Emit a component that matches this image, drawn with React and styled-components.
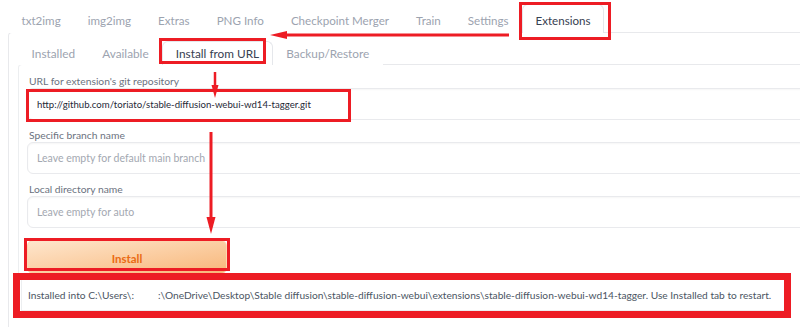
import React from 'react';
import styled, { createGlobalStyle } from 'styled-components';

const Global = createGlobalStyle`
  html, body { margin: 0; padding: 0; background: #fff; overflow: hidden; }
  body { font-family: Lato, "Noto Sans", sans-serif; }
`;

const Page = styled.div`
  position: relative;
  width: 840px;
  height: 327px;
  overflow: hidden;
  background: #fff;
`;

const TabBar = styled.div`
  display: flex;
  align-items: flex-end;
  height: 32px;
  padding-left: 8px;
`;

const Tab = styled.div`
  box-sizing: border-box;
  height: 29px;
  padding: 3px 12.5px 0;
  display: flex;
  align-items: center;
  font-size: 11.6px;
  line-height: 1;
  white-space: nowrap;
  color: ${p => (p.$active ? '#374151' : '#9ca3af')};
  border: 1px solid ${p => (p.$active ? '#e5e7eb' : 'transparent')};
  border-bottom: none;
  border-radius: 6px 6px 0 0;
  background: #fff;
  margin-bottom: -1px;
  position: relative;
  z-index: 1;
`;

const OuterPanel = styled.div`
  margin-left: 8px;
  border-top: 1px solid #e8e9ec;
  border-left: 1px solid #e8e9ec;
  border-top-left-radius: 4px;
  padding-left: 9px;
  height: 300px;
`;

const SubTabBar = styled.div`
  display: flex;
  align-items: flex-end;
  height: 31px;
`;

const SubTab = styled(Tab)`
  height: 24px;
  padding: 1px 12.6px 0;
  font-size: 11.8px;
`;

const InnerPanel = styled.div`
  border-top: 1px solid #e8e9ec;
  border-left: 1px solid #eceef0;
  border-top-left-radius: 4px;
  padding: 9px 0 0 8px;
  display: flex;
  flex-direction: column;
  gap: 8px;
`;

const Field = styled.div`
  display: flex;
  flex-direction: column;
`;

const Label = styled.div`
  height: 14px;
  line-height: 14px;
  font-size: 10.3px;
  color: #6b7280;
  padding-left: 2px;
  white-space: nowrap;
`;

const Input = styled.div`
  box-sizing: border-box;
  height: 32px;
  margin-right: 10px;
  border: 1px solid #e9eaed;
  border-radius: 6px;
  box-shadow: 0 1px 2px rgba(0, 0, 0, 0.04) inset;
  padding-left: 9px;
  display: flex;
  align-items: center;
  font-size: ${p => (p.$placeholder ? '10.5px' : '9.6px')};
  white-space: nowrap;
  color: ${p => (p.$placeholder ? '#a3a8b1' : '#1f2937')};
`;

const InstallButton = styled.div`
  box-sizing: border-box;
  margin-top: 4px;
  width: 200px;
  height: 34px;
  border-radius: 6px;
  border: 1px solid #fcd8b2;
  background: linear-gradient(to bottom right, #fee6cd, #f8b77a);
  display: flex;
  align-items: center;
  justify-content: center;
  padding-top: 2px;
  font-size: 11.5px;
  font-weight: 700;
  color: #ea6a12;
`;

const Result = styled.div`
  box-sizing: border-box;
  margin: 5px 0 0 3px;
  width: 764px;
  height: 32px;
  border: 1px solid #eceef0;
  padding-left: 6px;
  line-height: 30px;
  font-size: 10.2px;
  color: #4b5563;
  white-space: nowrap;
  overflow: hidden;
`;

const Redacted = styled.span`
  display: inline-block;
  width: 24px;
`;

const Overlay = styled.div`
  position: absolute;
  inset: 0;
  pointer-events: none;
  z-index: 10;
`;

const Mark = styled.div`
  position: absolute;
  box-sizing: border-box;
  left: ${p => p.$x}px;
  top: ${p => p.$y}px;
  width: ${p => p.$w}px;
  height: ${p => p.$h}px;
  border: ${p => p.$t || 3}px solid #ed1c24;
`;

const Arrows = styled.svg`
  position: absolute;
  left: 0;
  top: 0;
`;

const topTabs = ['txt2img', 'img2img', 'Extras', 'PNG Info', 'Checkpoint Merger', 'Train', 'Settings', 'Extensions'];
const subTabs = ['Installed', 'Available', 'Install from URL', 'Backup/Restore'];

export default function App() {
  return (
    <>
      <Global />
      <Page>
        <TabBar>
          {topTabs.map(t => (
            <Tab key={t} $active={t === 'Extensions'}>{t}</Tab>
          ))}
        </TabBar>
        <OuterPanel>
          <SubTabBar>
            {subTabs.map(t => (
              <SubTab key={t} $active={t === 'Install from URL'}>{t}</SubTab>
            ))}
          </SubTabBar>
          <InnerPanel>
            <Field>
              <Label>URL for extension's git repository</Label>
              <Input>http://github.com/toriato/stable-diffusion-webui-wd14-tagger.git</Input>
            </Field>
            <Field>
              <Label>Specific branch name</Label>
              <Input $placeholder>Leave empty for default main branch</Input>
            </Field>
            <Field>
              <Label>Local directory name</Label>
              <Input $placeholder>Leave empty for auto</Input>
            </Field>
            <InstallButton>Install</InstallButton>
          </InnerPanel>
          <Result>
            Installed into C:\Users\:<Redacted />:\OneDrive\Desktop\Stable diffusion\stable-diffusion-webui\extensions\stable-diffusion-webui-wd14-tagger. Use Installed tab to restart.
          </Result>
        </OuterPanel>
        <Overlay>
          <Mark $x={519} $y={2} $w={92} $h={38} />
          <Mark $x={159} $y={38} $w={107} $h={26} />
          <Mark $x={26} $y={89} $w={325} $h={33} />
          <Mark $x={24} $y={238} $w={206} $h={33} />
          <Mark $x={13} $y={273} $w={778} $h={45} $t={7} />
          <Arrows width="800" height="327" viewBox="0 0 800 327">
            <line x1="282" y1="35" x2="509" y2="35" stroke="#ed1c24" strokeWidth="3" />
            <polygon points="270,35 287,31 287,39" fill="#ed1c24" />
            <line x1="215" y1="72" x2="215" y2="88" stroke="#ed1c24" strokeWidth="2.5" />
            <polygon points="215,98 211.5,85 218.5,85" fill="#ed1c24" />
            <line x1="211" y1="132" x2="211" y2="220" stroke="#ed1c24" strokeWidth="3" />
            <polygon points="211,234 206.5,217 215.5,217" fill="#ed1c24" />
          </Arrows>
        </Overlay>
      </Page>
    </>
  );
}
